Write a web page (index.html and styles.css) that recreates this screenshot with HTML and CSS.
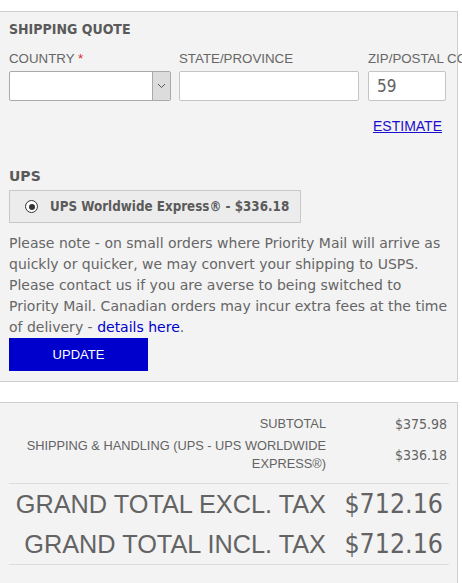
FILE: index.html
```html
<!DOCTYPE html>
<html lang="en">
<head>
    <meta charset="UTF-8">
    <meta name="viewport" content="width=device-width, initial-scale=1.0">
    <title>Shipping Quote</title>
    <link rel="stylesheet" href="styles.css">
</head>
<body>
    <!-- Shipping quote panel -->
    <section class="panel quote">
        <h2 class="quote-title">SHIPPING QUOTE</h2>

        <div class="fields">
            <div class="field">
                <label class="field-label">COUNTRY <span class="required">*</span></label>
                <div class="select country">
                    <span class="select-arrow">
                        <svg width="9" height="6" viewBox="0 0 9 6"><path d="M1 1l3.5 3.5L8 1" fill="none" stroke="#555" stroke-width="1"/></svg>
                    </span>
                </div>
            </div>
            <div class="field">
                <label class="field-label">STATE/PROVINCE</label>
                <input type="text" class="text-input state">
            </div>
            <div class="field">
                <label class="field-label">ZIP/POSTAL CODE</label>
                <input type="text" class="text-input zip" value="59">
            </div>
        </div>

        <div class="estimate-row">
            <a href="#" class="estimate">ESTIMATE</a>
        </div>

        <h3 class="carrier">UPS</h3>
        <label class="rate">
            <span class="radio"></span>
            <span class="rate-text">UPS Worldwide Express® - $336.18</span>
        </label>

        <p class="note">Please note - on small orders where Priority Mail will arrive as quickly or quicker, we may convert your shipping to USPS. Please contact us if you are averse to being switched to Priority Mail. Canadian orders may incur extra fees at the time of delivery - <a href="#" class="note-link">details here</a>.</p>

        <button class="update">UPDATE</button>
    </section>

    <!-- Totals panel -->
    <section class="panel totals">
        <table class="totals-table">
            <tr class="row-small">
                <th>SUBTOTAL</th>
                <td>$375.98</td>
            </tr>
            <tr class="row-small row-last">
                <th>SHIPPING &amp; HANDLING (UPS - UPS WORLDWIDE EXPRESS®)</th>
                <td>$336.18</td>
            </tr>
            <tr class="row-grand">
                <th>GRAND TOTAL EXCL. TAX</th>
                <td>$712.16</td>
            </tr>
            <tr class="row-grand row-last">
                <th>GRAND TOTAL INCL. TAX</th>
                <td>$712.16</td>
            </tr>
        </table>
    </section>
</body>
</html>
```

FILE: styles.css
```css
/* Page */
html, body {
    overflow-x: hidden;
}

body {
    margin: 0;
    padding-top: 11px;
    background: #fff;
    color: #636363;
    font-family: 'DejaVu Sans', sans-serif;
}

/* Panels */
.panel {
    background-color: #f3f3f3;
    border: 1px solid #cfcfcf;
    margin-left: -1px;
    width: 440px;
    padding: 0 8px 0 9px;
}

.quote {
    padding-top: 9px;
    padding-bottom: 10px;
}

.totals {
    margin-top: 20px;
    padding-top: 10px;
    padding-bottom: 20px;
}

/* Title */
.quote-title {
    margin: 0;
    font-family: 'DejaVu Sans Condensed', 'DejaVu Sans', sans-serif;
    font-size: 14px;
    line-height: 16px;
    font-weight: bold;
    color: #5a5a5a;
}

/* Form fields */
.fields {
    display: grid;
    grid-template-columns: 170px 189px 78px;
    margin-top: 14px;
}

.field-label {
    display: block;
    font-family: 'Liberation Sans', Arial, sans-serif;
    font-size: 13.3px;
    line-height: 16px;
    color: #666;
    white-space: nowrap;
    margin-bottom: 4px;
}

.required {
    color: #e02b27;
}

.select {
    box-sizing: border-box;
    width: 162px;
    height: 30px;
    background: #fff;
    border: 1px solid #a9a9a9;
    border-radius: 2px;
    display: flex;
    justify-content: flex-end;
}

.select-arrow {
    width: 17px;
    background: #dcdcdc;
    border-left: 1px solid #a9a9a9;
    display: flex;
    align-items: center;
    justify-content: center;
}

.text-input {
    box-sizing: border-box;
    height: 30px;
    margin: 0;
    background: #fff;
    border: 1px solid #c4c4c4;
    border-radius: 2px;
    padding: 0 8px;
    font-family: 'DejaVu Sans Condensed', 'DejaVu Sans', sans-serif;
    font-size: 17px;
    color: #636363;
    outline: none;
}

.state {
    width: 180px;
}

.zip {
    width: 78px;
}

/* Estimate link */
.estimate-row {
    display: flex;
    justify-content: flex-end;
    margin-top: 17px;
    padding-right: 7px;
}

.estimate {
    font-family: 'Liberation Sans', Arial, sans-serif;
    font-size: 14px;
    line-height: 17px;
    color: #1a0dcc;
}

/* Carrier + rate */
.carrier {
    margin: 33px 0 0;
    font-size: 14px;
    line-height: 17px;
    font-weight: bold;
    color: #5a5a5a;
}

.rate {
    box-sizing: border-box;
    width: 292px;
    height: 33px;
    margin-top: 5px;
    display: flex;
    align-items: center;
    background: #ececec;
    border: 1px solid #c8c8c8;
    padding-left: 15px;
}

.radio {
    box-sizing: border-box;
    width: 13px;
    height: 13px;
    border: 1.5px solid #333;
    border-radius: 50%;
    background: #fff;
    display: flex;
    align-items: center;
    justify-content: center;
}

.radio::after {
    content: '';
    width: 6px;
    height: 6px;
    border-radius: 50%;
    background: #333;
}

.rate-text {
    margin-left: 12px;
    font-family: 'DejaVu Sans Condensed', 'DejaVu Sans', sans-serif;
    font-size: 13.3px;
    font-weight: bold;
    color: #5a5a5a;
}

/* Note */
.note {
    margin: 10px -6px 0 0;
    font-size: 14px;
    line-height: 21px;
    color: #666;
}

.note-link {
    color: #0000cc;
    text-decoration: none;
}

/* Update button */
.update {
    display: block;
    width: 139px;
    height: 33px;
    margin: 0;
    border: none;
    background-color: #0000cc;
    color: #fff;
    font-family: 'Liberation Sans', Arial, sans-serif;
    font-size: 13px;
    cursor: pointer;
}

/* Totals table */
.totals-table {
    width: 100%;
    table-layout: fixed;
    border-collapse: collapse;
}

.totals-table th {
    font-family: 'Liberation Sans', Arial, sans-serif;
    font-weight: normal;
    text-align: right;
    width: 317px;
    padding-right: 0;
}

.totals-table td {
    text-align: right;
    font-family: 'DejaVu Sans Condensed', 'DejaVu Sans', sans-serif;
    white-space: nowrap;
}

.row-small th,
.row-small td {
    font-size: 12.8px;
    line-height: 18px;
    padding: 2px 0;
}

.row-small td {
    font-size: 14px;
    padding-right: 2px;
}

.row-small.row-last th,
.row-small.row-last td {
    padding-bottom: 10px;
}

.row-grand th,
.row-grand td {
    font-size: 25.3px;
    line-height: 30px;
    padding: 5px 0;
    white-space: nowrap;
}

.row-grand td {
    font-size: 26.5px;
    padding-right: 6px;
}

.row-last {
    border-bottom: 1px solid #dcdcdc;
}
```
